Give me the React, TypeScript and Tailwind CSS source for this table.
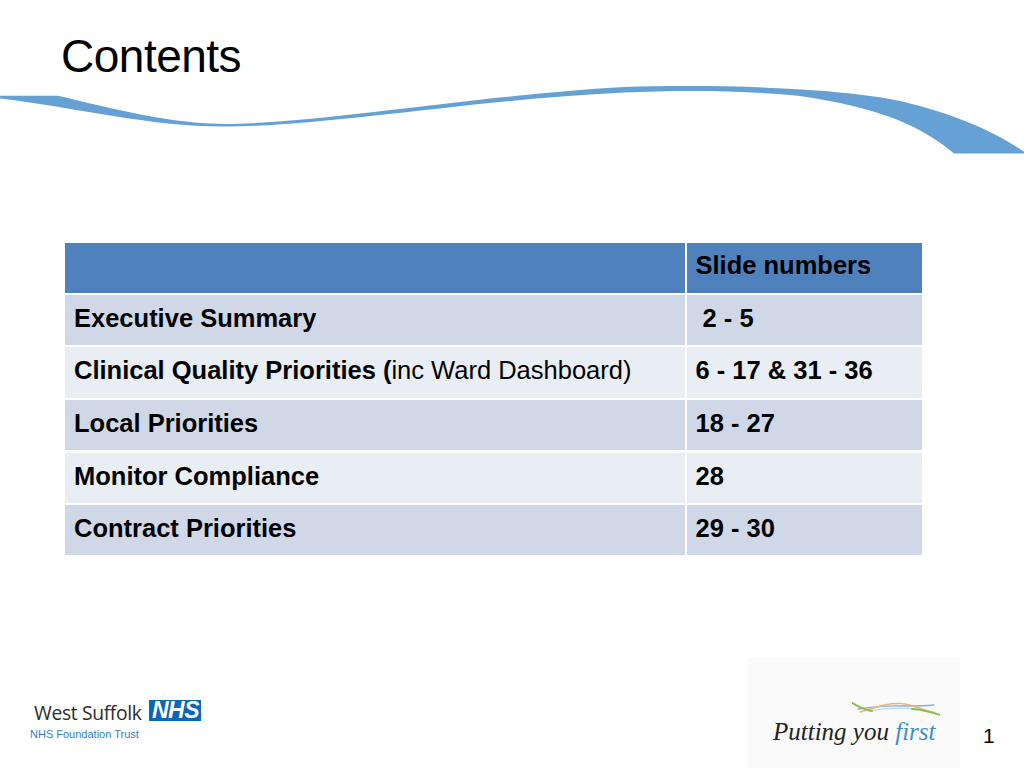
import React from "react";

const rows: { label: React.ReactNode; slides: string }[] = [
  { label: "Executive Summary", slides: "\u00a02 - 5" },
  {
    label: (
      <>
        Clinical Quality Priorities (<span className="font-normal">inc Ward Dashboard)</span>
      </>
    ),
    slides: "6 - 17 & 31 - 36",
  },
  { label: "Local Priorities", slides: "18 - 27" },
  { label: "Monitor Compliance", slides: "28" },
  { label: "Contract Priorities", slides: "29 - 30" },
];

const Wave: React.FC = () => (
  <svg className="block w-[1024px] h-[80px]" viewBox="0 80 1024 80" preserveAspectRatio="none">
    <path
      fill="#66a1d5"
      d="M0,95.7 L58,95.7 C110,108 170,124 227,124 C330,122 480,95 624,87 C720,84 840,88 900,101 C960,115 1000,135 1024,151.7 L1024,153.5 L954,153.5 C920,125 880,108 800,96 C740,90 680,90 624,92.5 C470,100 330,126 227,126.5 C150,127 80,108 0,98.5 Z"
    />
  </svg>
);

const Swoosh: React.FC = () => (
  <svg className="block w-[88px] h-[14px] ml-[79px]" viewBox="0 0 88 14" fill="none" strokeLinecap="round">
    <path d="M16,9 C32,6 52,5 72,8" stroke="#b9d7ee" strokeWidth="1.2" />
    <path d="M6,7 C20,5 35,3 50,4 C62,4 72,4 82,3" stroke="#7fb2de" strokeWidth="1.3" />
    <path d="M8,10 C25,5 35,1 48,1.5 C60,2 72,8 84,12" stroke="#f2b27a" strokeWidth="1.5" />
    <path d="M0,1 C6,4 12,8 20,9" stroke="#8cc04a" strokeWidth="2" />
    <path d="M60,7 C72,8 80,10 88,13" stroke="#8cc04a" strokeWidth="1.8" />
  </svg>
);

const App: React.FC = () => {
  return (
    <div className="w-[1024px] h-[768px] bg-white flex flex-col overflow-hidden font-['Liberation_Sans',Arial,sans-serif] text-black">
      {/* Title */}
      <div className="h-[80px] pt-[33px] pl-[61px]">
        <h1 className="text-[46px] leading-[46px] tracking-[-0.5px]">Contents</h1>
      </div>
      <Wave />

      {/* Contents table */}
      <div className="mt-[83px] ml-[65px] w-[857px] grid grid-cols-[620px_235px] gap-x-[2px] gap-y-[2.4px] text-[25.5px] leading-[30px] font-bold">
        <div className="h-[49.5px] bg-[#4f81bd]" />
        <div className="h-[49.5px] bg-[#4f81bd] pt-[7px] pl-[8.5px]">Slide numbers</div>
        {rows.map((r, i) => {
          const bg = i % 2 === 0 ? "bg-[#d0d8e8]" : "bg-[#e9edf4]";
          return (
            <React.Fragment key={i}>
              <div className={`h-[50.2px] pt-[8px] pl-[9px] ${bg}`}>{r.label}</div>
              <div className={`h-[50.2px] pt-[8px] pl-[8.5px] ${bg}`}>{r.slides}</div>
            </React.Fragment>
          );
        })}
      </div>

      {/* Footer */}
      <div className="mt-auto h-[110px] flex">
        {/* West Suffolk NHS logo */}
        <div className="pl-[30px] pt-[41.7px] flex flex-col">
          <div className="flex items-start ml-[4px]">
            <span className="pt-[2px] text-[19.3px] leading-[22px] text-[#2b2b2b] font-['Open_Sans','Liberation_Sans',sans-serif] tracking-[-0.35px]">
              West Suffolk
            </span>
            <div className="ml-[8px] h-[21.6px] w-[52px] bg-[#0a66b7] flex items-center justify-center">
              <span className="text-white font-bold italic text-[23px] leading-[22px] tracking-[-0.5px]">NHS</span>
            </div>
          </div>
          <span className="mt-[4.5px] text-[11px] leading-[12px] text-[#2f7fc4]">NHS Foundation Trust</span>
        </div>

        {/* Putting you first */}
        <div className="ml-auto w-[213px] h-[110px] bg-[#fafafa] pt-[44px] pl-[26px] flex flex-col">
          <Swoosh />
          <div className="mt-[1px] text-[25px] leading-[30px] italic font-['Liberation_Serif',serif] text-[#222]">
            Putting you <span className="text-[#3d8fc6]">first</span>
          </div>
        </div>

        {/* Page number */}
        <div className="w-[64px] pl-[23px] pt-[66px] text-[21px] leading-[24px]">1</div>
      </div>
    </div>
  );
};

export default App;
